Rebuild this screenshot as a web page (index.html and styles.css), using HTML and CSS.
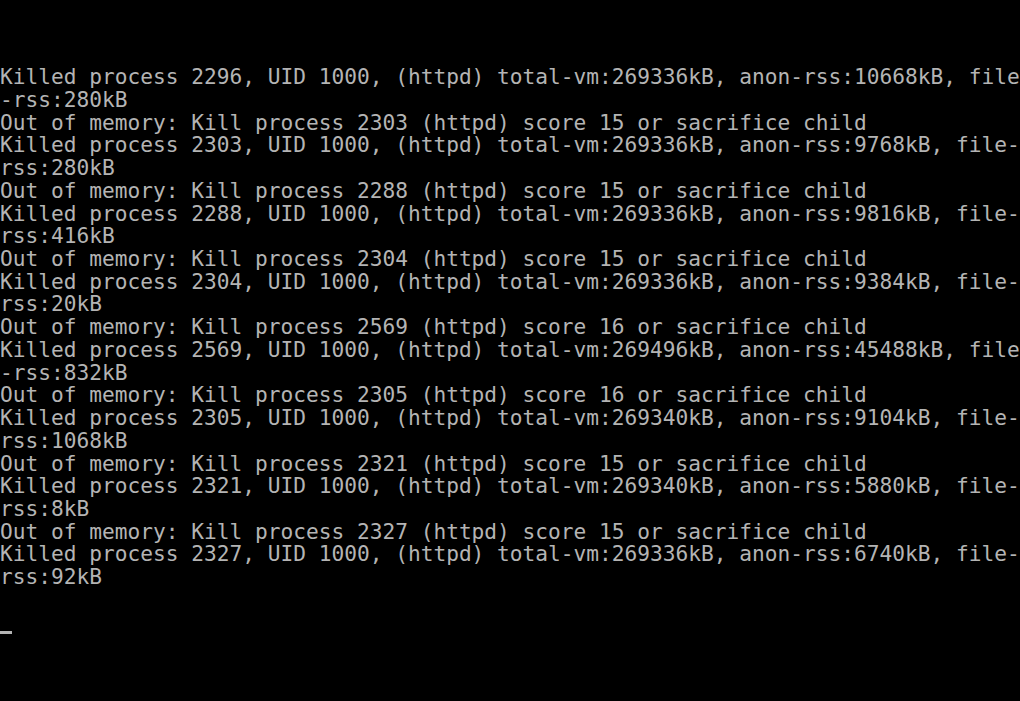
FILE: index.html
```html
<!DOCTYPE html>
<html>
<head>
<meta charset="utf-8">
<link rel="stylesheet" href="styles.css">
</head>
<body>
<div class="console">
<div class="line">Killed process 2296, UID 1000, (httpd) total-vm:269336kB, anon-rss:10668kB, file</div>
<div class="line">-rss:280kB</div>
<div class="line">Out of memory: Kill process 2303 (httpd) score 15 or sacrifice child</div>
<div class="line">Killed process 2303, UID 1000, (httpd) total-vm:269336kB, anon-rss:9768kB, file-</div>
<div class="line">rss:280kB</div>
<div class="line">Out of memory: Kill process 2288 (httpd) score 15 or sacrifice child</div>
<div class="line">Killed process 2288, UID 1000, (httpd) total-vm:269336kB, anon-rss:9816kB, file-</div>
<div class="line">rss:416kB</div>
<div class="line">Out of memory: Kill process 2304 (httpd) score 15 or sacrifice child</div>
<div class="line">Killed process 2304, UID 1000, (httpd) total-vm:269336kB, anon-rss:9384kB, file-</div>
<div class="line">rss:20kB</div>
<div class="line">Out of memory: Kill process 2569 (httpd) score 16 or sacrifice child</div>
<div class="line">Killed process 2569, UID 1000, (httpd) total-vm:269496kB, anon-rss:45488kB, file</div>
<div class="line">-rss:832kB</div>
<div class="line">Out of memory: Kill process 2305 (httpd) score 16 or sacrifice child</div>
<div class="line">Killed process 2305, UID 1000, (httpd) total-vm:269340kB, anon-rss:9104kB, file-</div>
<div class="line">rss:1068kB</div>
<div class="line">Out of memory: Kill process 2321 (httpd) score 15 or sacrifice child</div>
<div class="line">Killed process 2321, UID 1000, (httpd) total-vm:269340kB, anon-rss:5880kB, file-</div>
<div class="line">rss:8kB</div>
<div class="line">Out of memory: Kill process 2327 (httpd) score 15 or sacrifice child</div>
<div class="line">Killed process 2327, UID 1000, (httpd) total-vm:269336kB, anon-rss:6740kB, file-</div>
<div class="line">rss:92kB</div>
<div class="line"> </div>
<div class="line"><span class="cursor"></span></div>
</div>
</body>
</html>
```
FILE: styles.css
```css
html, body {
  margin: 0;
  padding: 0;
  background: #000;
  height: 100%;
  overflow: hidden;
}

.console {
  padding-top: 66.3px;
  font-family: "DejaVu Sans Mono", "Liberation Mono", monospace;
  font-size: 21.18px;
  line-height: 22.73px;
  color: #b4b4b4;
}

.line {
  white-space: pre;
  height: 22.73px;
}

.cursor {
  display: inline-block;
  width: 12px;
  height: 3px;
  background: #b4b4b4;
  vertical-align: -4px;
}
```
